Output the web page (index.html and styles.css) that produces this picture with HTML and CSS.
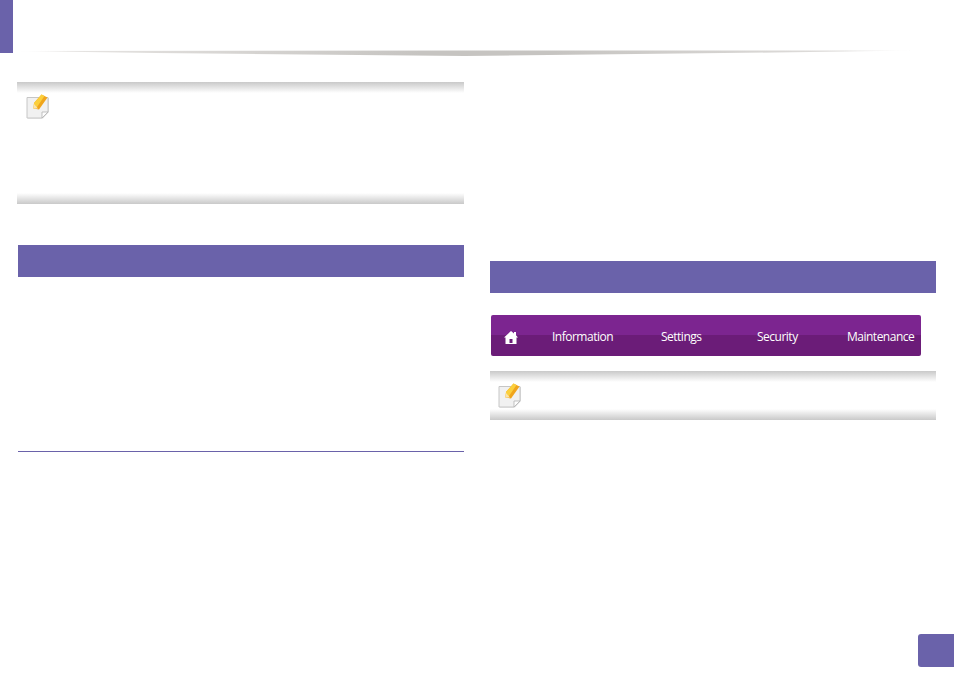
FILE: index.html
```html
<!DOCTYPE html>
<html lang="en">
<head>
<meta charset="utf-8">
<title>Manual page</title>
<link rel="stylesheet" href="styles.css">
</head>
<body>
<div class="page">
  <header class="head">
    <div class="tab"></div>
    <svg class="swoosh" width="900" height="9" viewBox="0 0 900 9" aria-hidden="true">
      <defs>
        <linearGradient id="sw" x1="0" x2="1" y1="0" y2="0">
          <stop offset="0" stop-color="#dedcda" stop-opacity="0"/>
          <stop offset="0.06" stop-color="#e6e4e2"/>
          <stop offset="0.45" stop-color="#c6c4c1"/>
          <stop offset="0.6" stop-color="#c6c4c1"/>
          <stop offset="0.92" stop-color="#dfdddb"/>
          <stop offset="1" stop-color="#e8e6e4" stop-opacity="0"/>
        </linearGradient>
        <filter id="swb" x="-2%" y="-60%" width="104%" height="220%">
          <feGaussianBlur stdDeviation="0.7"/>
        </filter>
      </defs>
      <polygon points="0,2 450,1.500 900,1.500 760,3.500 450,7 140,4" fill="url(#sw)" filter="url(#swb)"/>
    </svg>
  </header>
  <main class="cols">
    <section class="col-left">
      <div class="note note-tall">
        <svg class="note-icon" width="24" height="25" viewBox="0 0 24 25" aria-hidden="true">
          <path d="M2 4H23V18L17 24.500H2Z" fill="#dcdcdc"/>
          <path d="M1 3.500H22V18L16 24H1Z" fill="#f1f1f1" stroke="#c6c6c6"/>
          <path d="M22 18L16 24V18Z" fill="#fdfdfd" stroke="#b4b4b4" stroke-width="0.800"/>
          <path d="M15.500 0.500L21.500 3.500L13 15.500L7.500 14.500L8 9Z" fill="#f0a51c"/>
          <path d="M15.500 0.500L18.500 2L10 14.500L7.500 14.500L8 9Z" fill="#fbcf3c"/>
          <path d="M7.500 14.500L8 10L12 14.500Z" fill="#f9e3b0"/>
        </svg>
      </div>
      <div class="bar bar-left"></div>
      <div class="rule"></div>
    </section>
    <section class="col-right">
      <div class="bar"></div>
      <nav class="nav">
        <svg class="home" width="14" height="13" viewBox="0 0 14 13" aria-hidden="true">
          <path fill-rule="evenodd" d="M7 0L10 2.500V1H12V4.300L14 6.500H12.500V13H1.500V6.500H0ZM5.500 8V12H8.500V8Z" fill="#fff"/>
        </svg>
        <span>Information</span>
        <span>Settings</span>
        <span>Security</span>
        <span>Maintenance</span>
      </nav>
      <div class="note note-short">
        <svg class="note-icon" width="24" height="25" viewBox="0 0 24 25" aria-hidden="true">
          <path d="M2 4H23V18L17 24.500H2Z" fill="#dcdcdc"/>
          <path d="M1 3.500H22V18L16 24H1Z" fill="#f1f1f1" stroke="#c6c6c6"/>
          <path d="M22 18L16 24V18Z" fill="#fdfdfd" stroke="#b4b4b4" stroke-width="0.800"/>
          <path d="M15.500 0.500L21.500 3.500L13 15.500L7.500 14.500L8 9Z" fill="#f0a51c"/>
          <path d="M15.500 0.500L18.500 2L10 14.500L7.500 14.500L8 9Z" fill="#fbcf3c"/>
          <path d="M7.500 14.500L8 10L12 14.500Z" fill="#f9e3b0"/>
        </svg>
      </div>
    </section>
  </main>
  <div class="badge"></div>
</div>
</body>
</html>
```
FILE: styles.css
```css
* { box-sizing: border-box; }
html, body { margin: 0; background: #fff; }
.page {
  width: 954px;
  height: 674px;
  display: flex;
  flex-direction: column;
  overflow: hidden;
}
.head { position: relative; height: 53px; flex: none; }
.tab { width: 13px; height: 53px; background: #6a62aa; }
.swoosh { position: absolute; left: 15px; top: 49px; }
.cols {
  display: flex;
  gap: 26px;
  padding-left: 17px;
  flex: 1;
}
.col-left { width: 447px; padding-top: 29px; display: flex; flex-direction: column; }
.col-right { width: 446px; padding-top: 208px; display: flex; flex-direction: column; }
.bar { height: 32px; background: #6a62aa; flex: none; }
.bar-left { margin: 41px 0 0 1px; }
.rule { height: 1px; margin: 174px 0 0 1px; background: #6a62aa; }
.note {
  flex: none;
  display: flex;
  align-items: flex-start;
  background:
    linear-gradient(#c9c9c9, #fff) top / 100% 11px no-repeat,
    linear-gradient(#fff, #c9c9c9) bottom / 100% 11px no-repeat,
    #fff;
}
.note-tall { height: 122px; padding: 12px 0 0 9px; }
.note-short { height: 49px; padding: 12px 0 0 8px; }
.note-icon { display: block; }
.nav {
  flex: none;
  width: 430px;
  height: 41px;
  margin: 22px 0 15px 1px;
  padding-left: 13px;
  display: grid;
  grid-template-columns: 48px 109px 96px 90px auto;
  align-items: center;
  border-radius: 2px;
  background: linear-gradient(#7c2590 0, #7c2590 20px, #6b1c78 20px, #6b1c78 100%);
  color: #fff;
  font: 12px/16px "Open Sans", sans-serif;
  letter-spacing: -0.5px;
  white-space: nowrap;
}
.nav .home { display: block; margin-top: 3px; }
.nav span { margin-top: 3px; }
.badge {
  flex: none;
  align-self: flex-end;
  width: 36px;
  height: 33px;
  margin-bottom: 7px;
  border-radius: 3px 0 0 3px;
  background: #6a62aa;
}
```
